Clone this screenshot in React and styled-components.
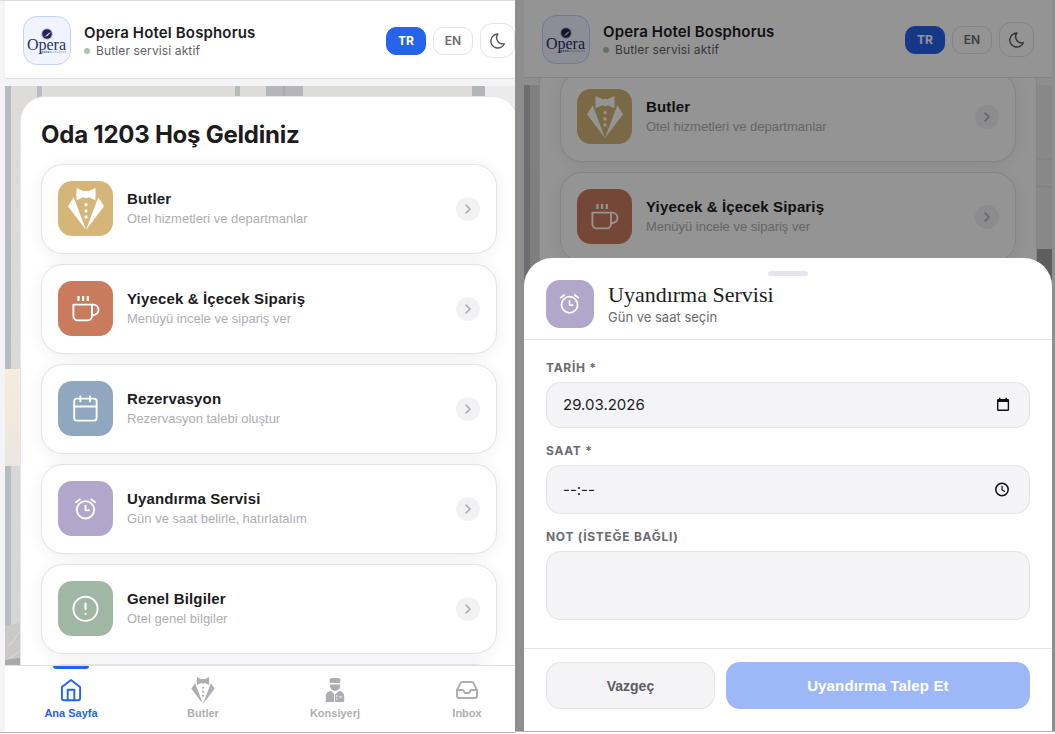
import React from "react";
import styled, { createGlobalStyle, css } from "styled-components";
import { Inbox, ChevronRight } from "lucide-react";

const GlobalStyle = createGlobalStyle`
  *, *::before, *::after { box-sizing: border-box; }
  body { margin: 0; background: #fff; }
  button, input, textarea { font: inherit; color: inherit; }
  h1, h2, p { margin: 0; font-weight: inherit; }
`;

const sans = `"Liberation Sans", Arial, sans-serif`;
const inter = `Inter, "Liberation Sans", sans-serif`;

const Page = styled.main`
  display: grid;
  grid-template-columns: 515fr 540fr;
  height: 100vh;
  font-family: ${inter};
  color: #1c1c1e;
`;

const Frame = styled.section`
  position: relative;
  display: flex;
  min-width: 0;
  overflow: hidden;
  background: #f4f4f6;
  border-bottom: 1px solid #b4b4b4;
  ${(p) =>
    p.$dimmed
      ? css`
          margin-bottom: 2px;
          padding: 0 3px 0 9px;
        `
      : css`
          margin-bottom: 1px;
          padding-left: 5px;
          border-top: 1px solid #dcdcdc;
        `}
`;

const Screen = styled.div`
  position: relative;
  flex: none;
  width: ${(p) => (p.$bleed ? "calc(100% + 18px)" : "100%")};
  display: flex;
  flex-direction: column;
  min-height: 0;
`;

const Header = styled.header`
  position: relative;
  z-index: 1;
  display: flex;
  align-items: center;
  gap: 13px;
  height: 78px;
  flex: none;
  padding: 2px 18px 0;
  background: #fff;
  border-bottom: 1px solid #e2e2e8;
`;

const LogoBox = styled.div`
  width: 48px;
  height: 49px;
  flex: none;
  border: 1px solid #c0d5fd;
  border-radius: 14px;
  background: #eff4ff;
  overflow: hidden;
`;

const Brand = styled.div`
  flex: 1;
  min-width: 0;
`;

const BrandName = styled.h1`
  font-size: 15px;
  line-height: 20px;
  font-weight: 600;
  letter-spacing: 0.01em;
  white-space: nowrap;
`;

const Status = styled.p`
  display: flex;
  align-items: center;
  gap: 6px;
  font-size: 12px;
  line-height: 16px;
  letter-spacing: 0.01em;
  color: #5f5f63;
  &::before {
    content: "";
    width: 6px;
    height: 6px;
    border-radius: 50%;
    background: #a9c3ae;
  }
`;

const Tools = styled.div`
  display: flex;
  align-items: center;
  gap: 7px;
`;

const LangButton = styled.button`
  width: 40px;
  height: 28px;
  padding: 0;
  border-radius: 10px;
  border: 1px solid ${(p) => (p.$active ? "#2563eb" : "#e4e4e8")};
  background: ${(p) => (p.$active ? "#2563eb" : "#fff")};
  color: ${(p) => (p.$active ? "#fff" : "#6b6b70")};
  font-size: 12px;
  font-weight: ${(p) => (p.$active ? 700 : 600)};
`;

const ThemeButton = styled.button`
  display: grid;
  place-items: center;
  width: 35px;
  height: 35px;
  padding: 0;
  border: 1px solid #e4e4e8;
  border-radius: 12px;
  background: #fff;
  color: #55555a;
`;

const Body = styled.div`
  position: relative;
  flex: 1;
  min-height: 0;
  overflow: hidden;
`;

const Backdrop = styled.svg`
  position: absolute;
  inset: 7px 0 0;
  width: 100%;
  height: calc(100% - 7px);
`;

const Content = styled.div`
  position: relative;
  margin: ${(p) => (p.$scrolled ? "-29px" : "18px")} 16px 0;
  padding: 23px 20px;
  background: #fff;
  border-radius: 24px;
  box-shadow: 0 0 0 1px #e6e6ea;
`;

const Welcome = styled.h2`
  font-size: 24px;
  line-height: 30px;
  font-weight: 700;
  letter-spacing: -0.01em;
  padding-bottom: 14px;
`;

const CardList = styled.div`
  display: flex;
  flex-direction: column;
  gap: 10px;
`;

const Card = styled.button`
  display: flex;
  align-items: center;
  gap: 14px;
  padding: 16px 16px 17px;
  text-align: left;
  background: #fff;
  border: 1px solid #e3e3e9;
  border-radius: 22px;
  box-shadow: 0 2px 16px rgba(0, 0, 0, 0.07);
`;

const Tile = styled.span`
  display: grid;
  place-items: center;
  flex: none;
  width: ${(p) => p.$size}px;
  height: ${(p) => p.$size}px;
  border-radius: 14px;
  background: ${(p) => p.$color};
  color: #fff;
`;

const CardText = styled.span`
  display: flex;
  flex-direction: column;
  gap: 1px;
  flex: 1;
  min-width: 0;
  font-family: ${sans};
`;

const CardTitle = styled.span`
  font-size: 15px;
  line-height: 20px;
  font-weight: 700;
  letter-spacing: 0.01em;
  color: #1c1c1e;
`;

const CardNote = styled.span`
  font-size: 13px;
  line-height: 18px;
  color: #aeaeb2;
`;

const Arrow = styled.span`
  display: grid;
  place-items: center;
  width: 24px;
  height: 24px;
  border-radius: 50%;
  background: #f2f2f5;
  color: #a6a6ac;
`;

const Nav = styled.nav`
  display: grid;
  grid-template-columns: repeat(4, 1fr);
  height: 67px;
  flex: none;
  background: #fff;
  border-top: 1px solid #e0e0e4;
`;

const NavLink = styled.a`
  display: flex;
  flex-direction: column;
  align-items: center;
  gap: 2px;
  font-family: ${sans};
  font-size: 11px;
  line-height: 14px;
  font-weight: 700;
  text-decoration: none;
  color: ${(p) => (p.$active ? "#2563eb" : "#aeaeb2")};
  &::before {
    content: "";
    width: 36px;
    height: 3px;
    margin-bottom: 5px;
    border-radius: 0 0 3px 3px;
    background: ${(p) => (p.$active ? "#2563eb" : "transparent")};
  }
`;

const NavIcon = styled.span`
  display: grid;
  place-items: center;
  height: 28px;
`;

const Shade = styled.div`
  position: absolute;
  inset: 0;
  z-index: 2;
  display: flex;
  align-items: flex-end;
  padding: 0 3px 0 9px;
  background: rgba(0, 0, 0, 0.42);
`;

const Sheet = styled.form`
  position: relative;
  flex: 1;
  background: #fff;
  border-radius: 28px 28px 0 0;
`;

const Handle = styled.span`
  position: absolute;
  top: 13px;
  left: 50%;
  width: 40px;
  height: 5px;
  margin-left: -20px;
  border-radius: 3px;
  background: #e4e4ea;
`;

const SheetHead = styled.div`
  display: flex;
  align-items: center;
  gap: 14px;
  padding: 22px 22px 11px;
  border-bottom: 1px solid #e4e4e9;
`;

const SheetTitle = styled.h2`
  font-family: "Liberation Serif", "Times New Roman", serif;
  font-size: 22px;
  line-height: 26px;
`;

const SheetNote = styled.p`
  font-size: 13px;
  line-height: 18px;
  color: #6b6b70;
`;

const Fields = styled.div`
  display: flex;
  flex-direction: column;
  gap: 15px;
  padding: 20px 22px 28px;
`;

const Field = styled.div`
  display: flex;
  flex-direction: column;
  gap: 6px;
`;

const Label = styled.label`
  font-size: 12px;
  line-height: 16px;
  font-weight: 700;
  letter-spacing: 0.06em;
  color: #6b6b70;
`;

const boxed = css`
  background: #f4f4f7;
  border: 1px solid #e4e4e9;
  border-radius: 14px;
`;

const InputBox = styled.div`
  ${boxed}
  display: flex;
  align-items: center;
  height: ${(p) => p.$height}px;
  padding: 0 16px;
`;

const TextInput = styled.input`
  flex: 1;
  min-width: 0;
  padding: 0;
  border: 0;
  outline: 0;
  background: none;
  font-size: 15px;
  line-height: 20px;
  color: #1c1c1e;
`;

const PickerButton = styled.button`
  display: grid;
  place-items: center;
  width: 22px;
  height: 22px;
  padding: 0;
  border: 0;
  background: none;
  color: #111;
`;

const Note = styled.textarea`
  ${boxed}
  display: block;
  height: 69px;
  padding: 12px 16px;
  resize: none;
  outline: 0;
  font-size: 15px;
`;

const Actions = styled.div`
  display: grid;
  grid-template-columns: 10fr 18fr;
  gap: 11px;
  padding: 13px 22px 22px;
  border-top: 1px solid #e4e4e9;
`;

const Cancel = styled.button`
  ${boxed}
  height: 47px;
  font-family: ${sans};
  font-size: 14px;
  font-weight: 700;
  color: #5c5c60;
`;

const Submit = styled.button`
  height: 47px;
  border: 0;
  border-radius: 14px;
  background: #9db8f6;
  font-family: ${sans};
  font-size: 15px;
  font-weight: 700;
  letter-spacing: 0.01em;
  color: #fff;
`;

const Line = ({ size = 28, box = 28, weight = 1.9, children }) => (
  <svg
    width={size}
    height={size}
    viewBox={`0 0 ${box} ${box}`}
    fill="none"
    stroke="currentColor"
    strokeWidth={weight}
    strokeLinecap="round"
    strokeLinejoin="round"
    aria-hidden="true"
  >
    {children}
  </svg>
);

const MoonIcon = () => (
  <Line size={18} box={18} weight={1.4}>
    <path d="M8.900 2A6.200 6.200 0 0 0 15.300 11.700A7 7 0 1 1 8.900 2z" />
  </Line>
);

const CupIcon = () => (
  <Line>
    <path d="M6.500 1v5M11.100 1v5M15.800 1v5" strokeWidth="2.200" strokeLinecap="butt" />
    <path d="M1.400 9.600h18.600v11.400a4.400 4.400 0 0 1-4.400 4.400H5.800A4.400 4.400 0 0 1 1.400 21z" />
    <path d="M20 9.600h1.300a4.900 4.900 0 0 1 0 10.400h-1.300" />
  </Line>
);

const CalendarIcon = () => (
  <Line>
    <rect x="2.200" y="3.600" width="22.400" height="22" rx="2.600" />
    <path d="M2.200 11.500h22.400M8.400 1.200v5.200M18 1.200v5.200" />
  </Line>
);

const AlarmIcon = ({ size }) => (
  <Line size={size}>
    <circle cx="13.500" cy="14.800" r="8.700" />
    <path d="M3.900 7.200l4-2.900M23.100 7.200l-4-2.900M13.500 10.600v4.600h3.300" />
  </Line>
);

const InfoIcon = () => (
  <Line>
    <circle cx="13.500" cy="13.800" r="12.100" />
    <path d="M13.500 8.700v5.400M13.500 18.800v.1" strokeWidth="2.200" />
  </Line>
);

const HomeIcon = () => (
  <Line size={24} box={24} weight={1.9}>
    <path d="M2.900 8.900L12 2l9.100 6.900v11.400a2 2 0 0 1-2 2H4.900a2 2 0 0 1-2-2z" />
    <path d="M8.700 22.200V11.700h6.600v10.500" />
  </Line>
);

const TuxIcon = ({ width = 36, height = 42 }) => (
  <svg width={width} height={height} viewBox="0 0 108 126" fill="currentColor" aria-hidden="true">
    <path d="M26 0l21 10q7-3 14 0L82 0q2 18 0 37L63 28q-8 5-17 0L26 37q-2-19 0-37z" />
    <path d="M17 28L0 55l54 71L27 54z" />
    <path d="M91 28l17 27-54 71 27-72z" />
    <circle cx="54" cy="50" r="5" />
    <circle cx="54" cy="69" r="5" />
    <circle cx="54" cy="87" r="5" />
  </svg>
);

const ConciergeIcon = () => (
  <svg width="20" height="26" viewBox="0 0 20 26" fill="currentColor" aria-hidden="true">
    <path d="M4.600 2.500Q5 1 6.500 1h7Q15 1 15.400 2.500L15 6H5z" />
    <path d="M5 7.500h10.200v1.500a5.100 5 0 0 1-10.200 0z" />
    <path d="M6 13.800L9 17v8H.8v-6q0-4 5.200-5.200z" />
    <path d="M14 13.800L9.900 17.500V25h9.300v-6q0-4-5.200-5.200z" />
    <g fill="#fff">
      <circle cx="11.600" cy="19" r=".7" />
      <circle cx="11.600" cy="22" r=".7" />
      <path d="M14.200 19.400h2.600v1h-2.600z" />
    </g>
  </svg>
);

const DateGlyph = () => (
  <svg width="16" height="16" viewBox="0 0 16 16" aria-hidden="true">
    <path
      fill="currentColor"
      fillRule="evenodd"
      d="M5 .8h1.500V2h5V.8H13V2h.8q1.300 0 1.300 1.300v9.400q0 1.300-1.300 1.300H4.300Q3 14 3 12.700V3.300Q3 2 4.300 2H5zM4.400 5v7.600h9.300V5z"
    />
  </svg>
);

const ClockGlyph = () => (
  <Line size={16} box={16} weight={1.5}>
    <circle cx="8" cy="7.500" r="6.200" />
    <path d="M8 4V7.800l2.500 1.600" strokeWidth="1.200" />
  </Line>
);

const Logo = () => (
  <svg width="46" height="47" viewBox="0 0 46 47" role="img" aria-label="Opera">
    <circle cx="23" cy="17" r="5.800" fill="#b9bfd3" />
    <circle cx="23" cy="17" r="4.800" fill="#1d2560" />
    <path d="M19 19q2.500.8 4-1.500t4-2q-1.500 1-2.500 2.600t-3.500 1.500z" fill="#e5c48e" />
    <text x="22.500" y="33" textAnchor="middle" fontFamily="Liberation Serif, serif" fontSize="16" fill="#27306e">
      Opera
    </text>
    <path d="M17.500 35h9" stroke="#27306e" strokeWidth="1.200" strokeDasharray="1.500 .5" />
    <path d="M27 35h15" stroke="#9aa2c6" strokeWidth="1" strokeDasharray="1.500 .5" />
  </svg>
);

const RoomPhoto = () => (
  <Backdrop viewBox="0 0 528 579" preserveAspectRatio="none" aria-hidden="true">
    <defs>
      <linearGradient id="lamp" x1="0" y1="0" x2="0" y2="1">
        <stop offset="0" stopColor="#f5ecdc" />
        <stop offset="1" stopColor="#eae6e0" />
      </linearGradient>
      <linearGradient id="wall" x1="0" y1="0" x2="0" y2="1">
        <stop offset="0" stopColor="#dddcd9" />
        <stop offset="1" stopColor="#d4d5d6" />
      </linearGradient>
    </defs>
    <rect width="528" height="579" fill="url(#wall)" />
    <rect width="6" height="579" fill="#b8bcc1" />
    <rect x="32" width="5" height="579" fill="#bbbcbe" />
    <rect x="230" width="5" height="579" fill="#b8b9bb" />
    <rect x="261" width="37" height="579" fill="#b5b6ba" />
    <rect x="278" width="2" height="579" fill="#a9abb0" />
    <rect x="467" width="13" height="579" fill="#b3b5b9" />
    <rect x="480" width="48" height="579" fill="#ebebeb" />
    <path d="M510 74h18M510 101l18 1" stroke="#dadada" />
    <rect x="510" y="164" width="18" height="415" fill="#a2a2a2" />
    <rect y="283" width="20" height="97" fill="url(#lamp)" />
    <path d="M0 540l20-4v43H0z" fill="#cbc9c7" />
    <path d="M4 560l12-16M2 574l14-10" stroke="#dedcda" />
    <path d="M0 574l20-3v8H0z" fill="#a9a9ab" />
  </Backdrop>
);

const services = [
  { title: "Butler", note: "Otel hizmetleri ve departmanlar", color: "#d5b678", icon: <TuxIcon /> },
  { title: "Yiyecek & İçecek Sipariş", note: "Menüyü incele ve sipariş ver", color: "#c97b5d", icon: <CupIcon /> },
  { title: "Rezervasyon", note: "Rezervasyon talebi oluştur", color: "#8fa8c0", icon: <CalendarIcon /> },
  { title: "Uyandırma Servisi", note: "Gün ve saat belirle, hatırlatalım", color: "#b3a6cb", icon: <AlarmIcon /> },
  { title: "Genel Bilgiler", note: "Otel genel bilgiler", color: "#9fb7a3", icon: <InfoIcon /> },
  { title: "", note: "", color: "#d5b678", icon: null },
];

const tabs = [
  { label: "Ana Sayfa", icon: <HomeIcon />, active: true },
  { label: "Butler", icon: <TuxIcon width={24} height={27} /> },
  { label: "Konsiyerj", icon: <ConciergeIcon /> },
  { label: "Inbox", icon: <Inbox size={24} strokeWidth={1.9} /> },
];

function HotelScreen({ bleed, scrolled }) {
  return (
    <Screen $bleed={bleed}>
      <Header>
        <LogoBox>
          <Logo />
        </LogoBox>
        <Brand>
          <BrandName>Opera Hotel Bosphorus</BrandName>
          <Status>Butler servisi aktif</Status>
        </Brand>
        <Tools>
          <LangButton $active>TR</LangButton>
          <LangButton>EN</LangButton>
          <ThemeButton aria-label="Tema">
            <MoonIcon />
          </ThemeButton>
        </Tools>
      </Header>
      <Body>
        <RoomPhoto />
        <Content $scrolled={scrolled}>
          {!scrolled && <Welcome>Oda 1203 Hoş Geldiniz</Welcome>}
          <CardList>
            {services.map((s, i) => (
              <Card key={i}>
                <Tile $size={55} $color={s.color}>
                  {s.icon}
                </Tile>
                <CardText>
                  <CardTitle>{s.title}</CardTitle>
                  <CardNote>{s.note}</CardNote>
                </CardText>
                <Arrow>
                  <ChevronRight size={16} strokeWidth={2.2} />
                </Arrow>
              </Card>
            ))}
          </CardList>
        </Content>
      </Body>
      <Nav>
        {tabs.map((t) => (
          <NavLink key={t.label} href="#" $active={t.active}>
            <NavIcon>{t.icon}</NavIcon>
            {t.label}
          </NavLink>
        ))}
      </Nav>
    </Screen>
  );
}

function WakeUpSheet() {
  return (
    <Shade>
      <Sheet onSubmit={(e) => e.preventDefault()}>
        <Handle />
        <SheetHead>
          <Tile $size={48} $color="#b3a6cb">
            <AlarmIcon size={26} />
          </Tile>
          <div>
            <SheetTitle>Uyandırma Servisi</SheetTitle>
            <SheetNote>Gün ve saat seçin</SheetNote>
          </div>
        </SheetHead>
        <Fields>
          <Field>
            <Label htmlFor="date">TARİH *</Label>
            <InputBox $height={46}>
              <TextInput id="date" defaultValue="29.03.2026" />
              <PickerButton type="button" aria-label="Takvim">
                <DateGlyph />
              </PickerButton>
            </InputBox>
          </Field>
          <Field>
            <Label htmlFor="time">SAAT *</Label>
            <InputBox $height={49}>
              <TextInput id="time" defaultValue="--:--" />
              <PickerButton type="button" aria-label="Saat seç">
                <ClockGlyph />
              </PickerButton>
            </InputBox>
          </Field>
          <Field>
            <Label htmlFor="note">NOT (İSTEĞE BAĞLI)</Label>
            <Note id="note" />
          </Field>
        </Fields>
        <Actions>
          <Cancel type="button">Vazgeç</Cancel>
          <Submit type="submit">Uyandırma Talep Et</Submit>
        </Actions>
      </Sheet>
    </Shade>
  );
}

export default function App() {
  return (
    <>
      <GlobalStyle />
      <Page>
        <Frame>
          <HotelScreen bleed />
        </Frame>
        <Frame $dimmed>
          <HotelScreen scrolled />
          <WakeUpSheet />
        </Frame>
      </Page>
    </>
  );
}
